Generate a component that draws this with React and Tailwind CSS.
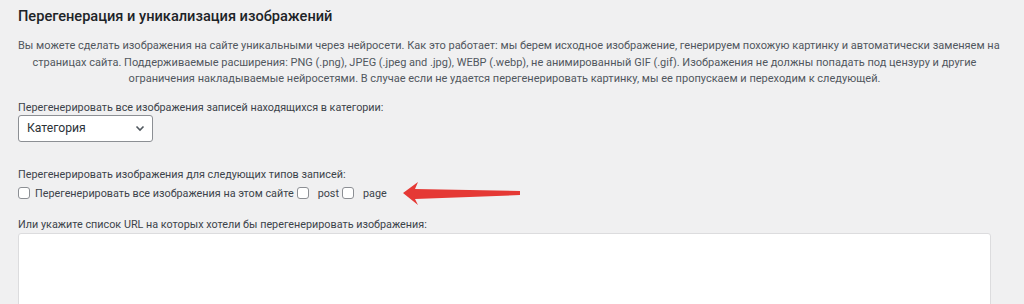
import React from "react";

export default function App() {
  const font = { fontFamily: 'Roboto, "Noto Sans", sans-serif' };
  return (
    <div className="w-[1024px] h-[304px] overflow-hidden bg-[#f0f0f1] text-[#3c434a] relative" style={font}>
      <div className="pl-[18px] pr-[33px] pt-[6px]">
        <h2 className="text-[14.6px] leading-[20px] font-medium text-[#1d2327]">
          Перегенерация и уникализация изображений
        </h2>
        <p className="mt-[12px] text-[11px] leading-[16.5px] text-center text-[#50575e] whitespace-nowrap">
          Вы можете сделать изображения на сайте уникальными через нейросети. Как это работает: мы берем исходное изображение, генерируем похожую картинку и автоматически заменяем на
          <br />
          страницах сайта. Поддерживаемые расширения: PNG (.png), JPEG (.jpeg and .jpg), WEBP (.webp), не анимированный GIF (.gif). Изображения не должны попадать под цензуру и другие
          <br />
          ограничения накладываемые нейросетями. В случае если не удается перегенерировать картинку, мы ее пропускаем и переходим к следующей.
        </p>
        <div className="mt-[12px] text-[10.8px] leading-[15px] text-[#3c434a]">
          Перегенерировать все изображения записей находящихся в категории:
        </div>
        <div className="mt-[0px] w-[135px] h-[27px] bg-white border border-[#8c8f94] rounded-[3px] flex items-center justify-between pl-[8px] pr-[7px]">
          <span className="text-[12.2px] text-[#2c3338]">Категория</span>
          <svg width="10" height="10" viewBox="0 0 10 10">
            <path d="M1.5 3.5 L5 7 L8.5 3.5" fill="none" stroke="#50575e" strokeWidth="1.6" />
          </svg>
        </div>
        <div className="mt-[25px] text-[10.8px] leading-[15px]">
          Перегенерировать изображения для следующих типов записей:
        </div>
        <div className="mt-[4px] flex items-center text-[10.8px] leading-[15px]">
          <span className="w-[12px] h-[12px] rounded-[3px] border border-[#8c8f94] bg-white mr-[5px]" />
          <span>Перегенерировать все изображения на этом сайте</span>
          <span className="w-[12px] h-[12px] rounded-[3px] border border-[#8c8f94] bg-white ml-[3px] mr-[9px]" />
          <span>post</span>
          <span className="w-[12px] h-[12px] rounded-[3px] border border-[#8c8f94] bg-white ml-[3px] mr-[9px]" />
          <span>page</span>
        </div>
        <div className="mt-[16px] text-[10.8px] leading-[15px]">
          Или укажите список URL на которых хотели бы перегенерировать изображения:
        </div>
        <div className="mt-[1px] w-[973px] h-[90px] bg-white border border-[#dcdcde] rounded-[3px]" />
      </div>
      <svg className="absolute left-[385px] top-[179px]" width="140" height="30" viewBox="0 0 140 30">
        <path d="M18 14 L33 3 L30 10 L135 12 L135 16 L30 20 L33 26 Z" fill="#e53935" />
      </svg>
    </div>
  );
}
